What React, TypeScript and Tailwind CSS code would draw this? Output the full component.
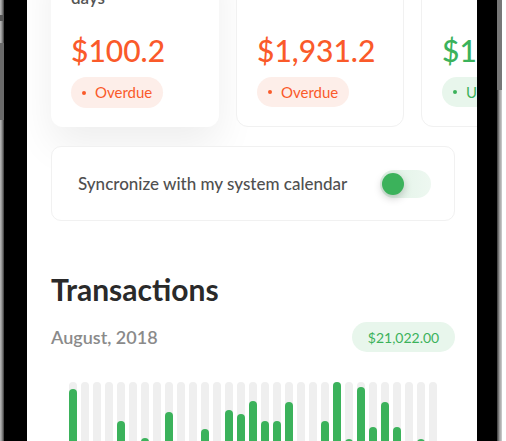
const CARDS = [
  { title: "Payment in", sub: "days", amount: "$100.2", status: "Overdue", tone: "orange", active: true },
  { title: "Due in 12 days", sub: "", amount: "$1,931.2", status: "Overdue", tone: "orange", active: false },
  { title: "Due in 28 days", sub: "", amount: "$1,204.0", status: "Upcoming", tone: "green", active: false },
];

// bar heights out of 100, left to right
const BARS = [
  93, 30, 25, 35, 61, 20, 44, 30, 70, 15, 28, 53, 22, 72, 68, 81,
  61, 61, 80, 20, 30, 61, 100, 43, 95, 55, 80, 55, 18, 43, 25,
];

function Card({ card }: { card: (typeof CARDS)[number] }) {
  const orange = card.tone === "orange";
  return (
    <div
      className={`shrink-0 w-[168px] h-[182px] rounded-[12px] bg-white px-5 pt-5 pb-[19px] flex flex-col ${
        card.active ? "shadow-[0_18px_40px_rgba(0,0,0,0.07)]" : "border border-[#f1f1f1]"
      }`}
    >
      <div className="h-[44px] text-[17px] leading-[22px] font-semibold text-[#555]">
        {card.title}
        {card.sub && <br />}
        {card.sub}
      </div>
      <div className={`mt-[23px] text-[30px] leading-9 font-medium ${orange ? "text-[#fa5a2a]" : "text-[#3bb25b]"}`}>
        {card.amount}
      </div>
      <div
        className={`mt-[9px] h-[31px] self-start rounded-full pl-[11px] pr-[11px] flex items-center gap-[9px] text-[15px] ${
          orange ? "bg-[#fdeee9] text-[#fa5a2a]" : "bg-[#e8f6ec] text-[#3bb25b]"
        }`}
      >
        <span className={`w-[4px] h-[4px] rounded-full ${orange ? "bg-[#fa5a2a]" : "bg-[#3bb25b]"}`} />
        {card.status}
      </div>
    </div>
  );
}

export default function App() {
  return (
    <div className="w-[506px] h-[441px] overflow-hidden bg-white flex font-['Lato','Liberation_Sans',sans-serif]">
      {/* left bezel */}
      <div className="w-[4px] flex flex-col bg-gradient-to-r from-[#bdbdbd] via-[#8d8d8d] to-[#3a3a3a]">
        <div className="h-[15px]" />
        <div className="h-[6px] bg-[#555]" />
        <div className="h-[22px]" />
        <div className="h-[77px] bg-[#6a6a6a]" />
      </div>
      <div className="w-[23px] bg-black" />

      {/* screen */}
      <div className="w-[450px] h-full overflow-hidden bg-white flex flex-col pl-[24px] pr-[22px]">
        <div className="-mt-[55px] flex gap-[17px]">
          {CARDS.map((c) => <Card key={c.amount} card={c} />)}
        </div>

        <div className="mt-[19px] h-[75px] shrink-0 rounded-[10px] border border-[#f1f1f1] bg-white pl-[26px] pr-[23px] flex items-center justify-between">
          <span className="text-[17px] font-medium text-[#505050]">Syncronize with my system calendar</span>
          <div className="w-[51px] h-[28px] rounded-full bg-gradient-to-r from-[#dff2e5] to-[#eef8f1] flex items-center pl-[2px]">
            <span className="w-[22px] h-[22px] rounded-full bg-[#3bb25b] shadow-[0_3px_8px_rgba(0,0,0,0.22)]" />
          </div>
        </div>

        <h2 className="mt-[50px] text-[30px] leading-9 font-bold text-[#2a2a2a]">Transactions</h2>

        <div className="mt-[15px] h-[30px] shrink-0 flex items-center justify-between">
          <span className="text-[18px] font-semibold text-[#8a8a8a]">August, 2018</span>
          <span className="h-[30px] w-[103px] rounded-full bg-[#e8f6ec] text-[#3bb25b] text-[14px] flex items-center justify-center">
            $21,022.00
          </span>
        </div>

        <div className="mt-[30px] h-[100px] shrink-0 flex justify-center gap-[4px]">
          {BARS.map((h, i) => (
            <div key={i} className="w-[8px] h-full rounded-full bg-[#efefef] flex flex-col justify-end">
              <div className="w-full rounded-full bg-[#3bb25b]" style={{ height: `${h}%` }} />
            </div>
          ))}
        </div>
      </div>

      {/* right bezel */}
      <div className="w-[20px] bg-black" />
      <div className="w-[5px] flex flex-col bg-gradient-to-r from-[#3a3a3a] via-[#9a9a9a] to-[#d0d0d0]">
        <div className="h-[90px] bg-[#777]" />
      </div>
      <div className="w-[4px] bg-white" />
    </div>
  );
}
